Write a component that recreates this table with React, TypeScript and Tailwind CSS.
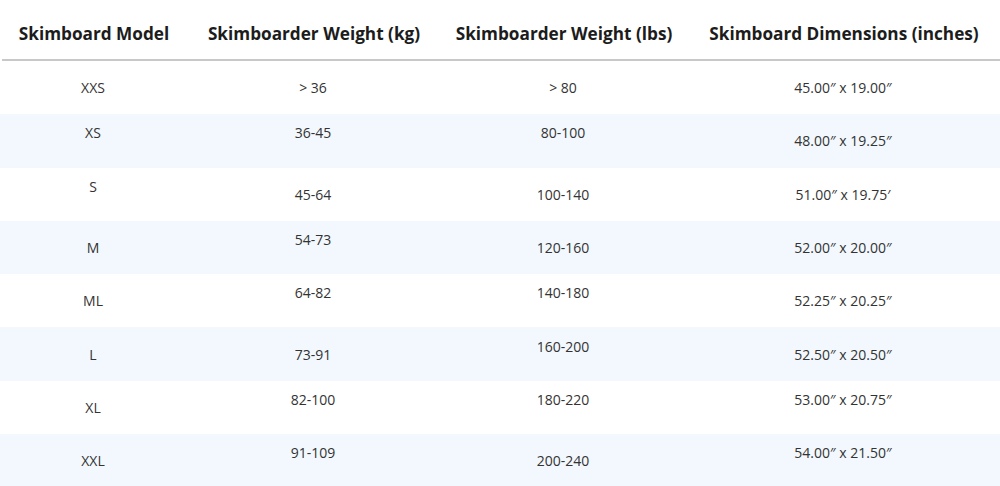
const headers = [
  "Skimboard Model",
  "Skimboarder Weight (kg)",
  "Skimboarder Weight (lbs)",
  "Skimboard Dimensions (inches)",
];

// "t" = text sits high in the cell, "m" = vertically centred
type Cell = [string, "t" | "m"];

const rows: Cell[][] = [
  [["XXS", "m"], ["> 36", "m"], ["> 80", "m"], ["45.00″ x 19.00″", "m"]],
  [["XS", "t"], ["36-45", "t"], ["80-100", "t"], ["48.00″ x 19.25″", "m"]],
  [["S", "t"], ["45-64", "m"], ["100-140", "m"], ["51.00″ x 19.75′", "m"]],
  [["M", "m"], ["54-73", "t"], ["120-160", "m"], ["52.00″ x 20.00″", "m"]],
  [["ML", "m"], ["64-82", "t"], ["140-180", "t"], ["52.25″ x 20.25″", "m"]],
  [["L", "m"], ["73-91", "m"], ["160-200", "t"], ["52.50″ x 20.50″", "m"]],
  [["XL", "m"], ["82-100", "t"], ["180-220", "t"], ["53.00″ x 20.75″", "t"]],
  [["XXL", "m"], ["91-109", "t"], ["200-240", "m"], ["54.00″ x 21.50″", "t"]],
];

const cols = "grid grid-cols-[186px_254px_246px_314px]";

export default function App() {
  return (
    <div className="h-[486px] w-[1000px] overflow-hidden bg-white font-['Open_Sans',sans-serif]">
      <div className={`${cols} h-[61px] items-center border-b-2 border-[#c8c8c8] ml-[2px] pt-[8px]`}>
        {headers.map((h) => (
          <div key={h} className="text-center text-[17.2px] font-bold text-[#1c1c1c] -ml-[2px]">
            {h}
          </div>
        ))}
      </div>
      {rows.map((row, i) => (
        <div
          key={i}
          className={`${cols} h-[53.3px] items-center ${i % 2 === 1 ? "bg-[#f2f8fd]" : "bg-white"}`}
        >
          {row.map(([text, pos], j) => (
            <div
              key={j}
              className={`text-center text-[14px] text-[#333333] ${pos === "t" ? "pb-[16px]" : ""}`}
            >
              {text}
            </div>
          ))}
        </div>
      ))}
    </div>
  );
}
